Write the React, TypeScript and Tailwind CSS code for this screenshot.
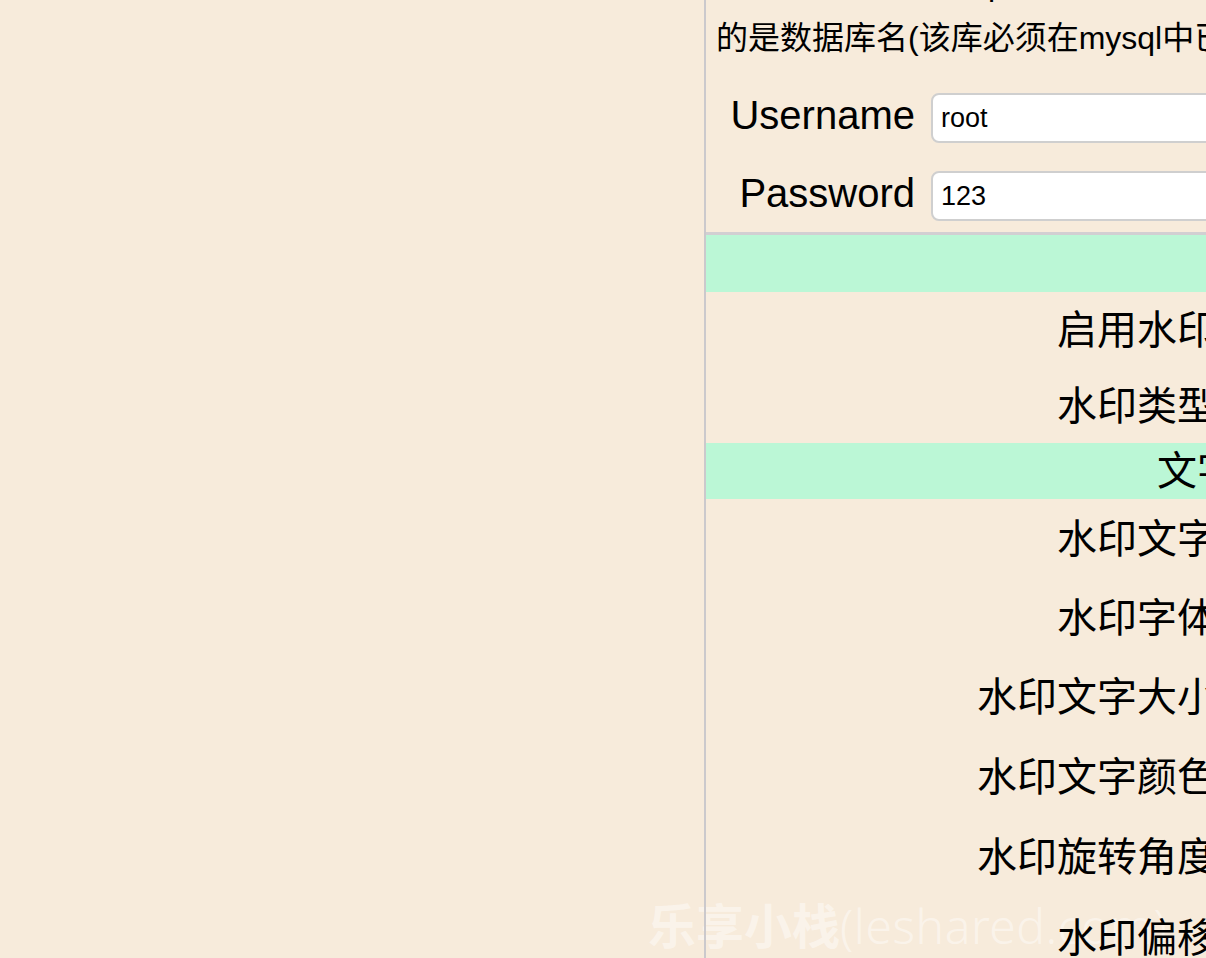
import React from 'react';

const cjk = "font-['Liberation_Sans','Noto_Sans_CJK_SC',sans-serif]";

type Row = { label: string; h: string; band?: boolean };

const rows: Row[] = [
  { label: '', h: 'h-[57px]', band: true },
  { label: '启用水印：', h: 'h-[76px]' },
  { label: '水印类型：', h: 'h-[75px]' },
  { label: '文字水印设置', h: 'h-[56px]', band: true },
  { label: '水印文字：', h: 'h-[79px]' },
  { label: '水印字体：', h: 'h-[79px]' },
  { label: '水印文字大小：', h: 'h-[80px]' },
  { label: '水印文字颜色：', h: 'h-[79px]' },
  { label: '水印旋转角度：', h: 'h-[82px]' },
  { label: '水印偏移：', h: 'h-[80px]' },
];

const App: React.FC = () => {
  return (
    <div className={`relative flex h-[958px] w-[1206px] overflow-hidden bg-[#f7ebdb] text-black ${cjk}`}>
      {/* 站点水印 */}
      <div className="pointer-events-none absolute left-[648px] top-[902px] z-0 whitespace-nowrap text-[48px] leading-none text-white/45">
        <span className="font-bold">乐享小栈</span>
        <span className="font-['Noto_Sans',sans-serif] font-light tracking-[0.5px]">(leshared.com)</span>
      </div>

      <div className="w-[704px] shrink-0" />

      <div className="relative z-10 flex w-[1000px] shrink-0 flex-col border-l-2 border-[#cbc9cc]">
        <div className="-mt-[43px] whitespace-nowrap pl-[10px] text-[32px] leading-[54px]">
          <div>填写数据库连接的 ip 及端口号，其中斜杠后面填写</div>
          <div>的是数据库名(该库必须在mysql中已经存在)</div>
        </div>

        <div className="mt-[28px] flex h-[50px] items-center">
          <label className="w-[209px] -translate-y-[3px] text-right font-['Liberation_Sans',sans-serif] text-[40px] leading-none">Username</label>
          <input
            defaultValue="root"
            className="ml-4 h-[50px] w-[420px] rounded-lg border-2 border-[#cfcfcf] bg-white px-[8px] font-['Liberation_Sans',sans-serif] text-[27px] outline-none"
          />
        </div>
        <div className="mt-[28px] flex h-[50px] items-center">
          <label className="w-[209px] -translate-y-[3px] text-right font-['Liberation_Sans',sans-serif] text-[40px] leading-none">Password</label>
          <input
            defaultValue="123"
            className="ml-4 h-[50px] w-[420px] rounded-lg border-2 border-[#cfcfcf] bg-white px-[8px] font-['Liberation_Sans',sans-serif] text-[27px] outline-none"
          />
        </div>

        <div className="mt-[11px] border-t-[3px] border-[#d2cfd2]">
          {rows.map((r, i) => (
            <div key={i} className={`flex items-center ${r.h} ${r.band ? 'bg-[#bbf7d6]' : ''}`}>
              {r.band ? (
                <span className="whitespace-nowrap pl-[451px] text-[40px] leading-none">{r.label}</span>
              ) : (
                <span className="w-[551px] shrink-0 whitespace-nowrap text-right text-[40px] leading-none">{r.label}</span>
              )}
            </div>
          ))}
        </div>
      </div>
    </div>
  );
};

export default App;
